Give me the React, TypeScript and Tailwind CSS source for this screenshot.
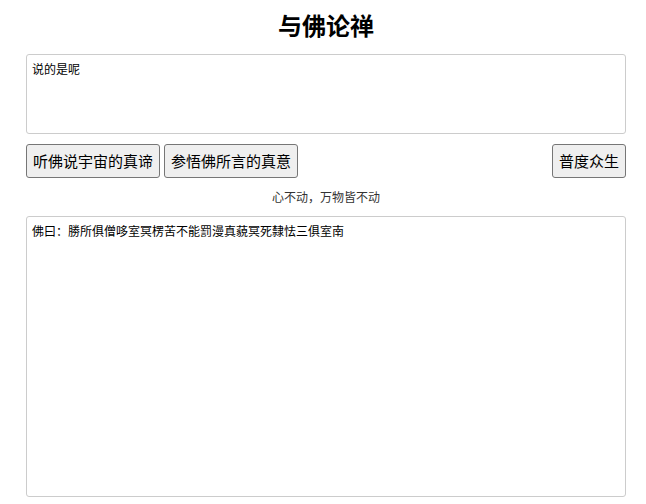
import React, { useState } from 'react';

const font = { fontFamily: '"Noto Sans CJK SC", "Noto Sans", sans-serif' };

export default function App() {
  const [input, setInput] = useState('说的是呢');
  const [output, setOutput] = useState('佛曰：勝所俱僧哆室冥楞苦不能罰漫真藐冥死隸怯三俱室南');

  return (
    <div className="w-[646px] h-[504px] bg-white text-black" style={font}>
      <div className="ml-[26px] w-[600px] flex flex-col">
        <h1 className="text-[24px] font-bold text-center leading-[30px] mt-[10px] mb-[14px]">与佛论禅</h1>

        <textarea
          className="block w-[600px] h-[80px] p-[5px] text-[12px] leading-[17px] border border-[#cccccc] rounded-[3px] resize-none outline-none"
          style={font}
          value={input}
          onChange={e => setInput(e.target.value)}
        />

        <div className="flex items-center mt-[10px] h-[34px]">
          <div className="flex gap-[4px]">
            <button className="h-[34px] px-[6px] text-[15px] leading-[20px] bg-[#efefef] border border-[#767676] rounded-[3px]">
              听佛说宇宙的真谛
            </button>
            <button className="h-[34px] px-[6px] text-[15px] leading-[20px] bg-[#efefef] border border-[#767676] rounded-[3px]">
              参悟佛所言的真意
            </button>
          </div>
          <button
            className="ml-auto h-[34px] px-[6px] text-[15px] leading-[20px] bg-[#efefef] border border-[#767676] rounded-[3px]"
            onClick={() => setOutput(output)}
          >
            普度众生
          </button>
        </div>

        <p className="text-center text-[12px] leading-[17px] text-[#333333] mt-[10px] mb-[11px]">心不动，万物皆不动</p>

        <textarea
          className="block w-[600px] h-[281px] p-[5px] text-[12px] leading-[17px] border border-[#cccccc] rounded-[3px] resize-none outline-none"
          style={font}
          value={output}
          onChange={e => setOutput(e.target.value)}
        />
      </div>
    </div>
  );
}
